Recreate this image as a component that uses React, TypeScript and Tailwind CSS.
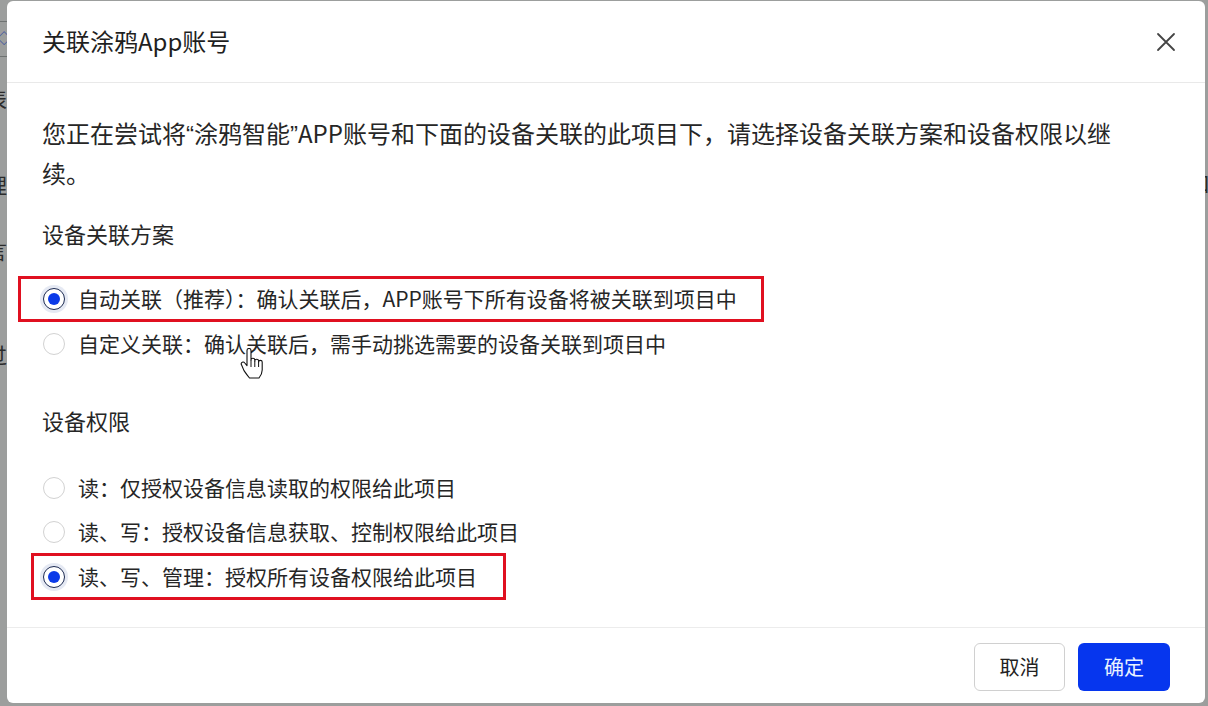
import React from "react";

const FONT = "font-['Microsoft_YaHei','Noto_Sans_CJK_SC','Noto_Sans',sans-serif]";

function Radio({ checked }: { checked?: boolean }) {
  if (checked) {
    return (
      <span className="w-[22px] h-[22px] rounded-full border border-[#1d2b52] bg-white flex items-center justify-center shrink-0 shadow-[0_0_0_3px_rgba(40,70,160,0.12)]">
        <span className="w-[12px] h-[12px] rounded-full bg-[#0b3ae8]" />
      </span>
    );
  }
  return <span className="w-[22px] h-[22px] rounded-full border border-[#d2d2d2] bg-white shrink-0" />;
}

function Q({ c }: { c: string }) {
  return <span className="font-['Liberation_Sans',sans-serif]">{c}</span>;
}

function HandCursor() {
  return (
    <svg width="24" height="34" viewBox="0 0 24 34" className="absolute left-[240px] top-[348px]">
      <path
        d="M7 2.5c0-1.2 1-2 2-2s2 .8 2 2V12c0-1 .9-1.7 1.9-1.7s1.9.8 1.9 1.7v1c0-1 .9-1.7 1.9-1.7s1.9.8 1.9 1.7v1c0-1 .9-1.6 1.8-1.6s1.8.7 1.8 1.6v8c0 3.5-1.6 6-3.2 8H9.5c-1.6-2-3.6-4.6-5.5-7.4L1.6 17c-.7-1 -.4-2.2.6-2.7.9-.5 1.9-.2 2.6.7L7 17.6V2.5z"
        fill="#fff"
        stroke="#111"
        strokeWidth="1.1"
        strokeLinejoin="round"
      />
      <path d="M11 12v7M14.8 13v6M18.6 14v5" stroke="#111" strokeWidth="1" fill="none" />
    </svg>
  );
}

export default function App() {
  return (
    <div className={`w-[1208px] h-[706px] bg-[#9c9e9d] flex overflow-hidden relative ${FONT}`}>
      {/* left backdrop strip */}
      <div className="w-[7px] h-full relative overflow-hidden shrink-0">
        <div className="absolute left-0 top-[21px] w-[7px] h-px bg-[#6f7372]" />
        <div className="absolute left-0 top-[56px] w-[7px] h-px bg-[#6f7372]" />
        <span className="absolute left-[-3px] top-[30px] text-[14px] text-[#2a3fa0] leading-none">◇</span>
        <span className="absolute left-[-14px] top-[88px] text-[21px] text-[#2b2b2b] leading-none">表</span>
        <span className="absolute left-[-14px] top-[174px] text-[21px] text-[#2b2b2b] leading-none">理</span>
        <span className="absolute left-[-14px] top-[240px] text-[21px] text-[#2b2b2b] leading-none">言</span>
        <span className="absolute left-[-14px] top-[344px] text-[21px] text-[#2b2b2b] leading-none">过</span>
      </div>

      {/* dialog */}
      <div className="w-[1198px] h-[702px] mt-px bg-white rounded-[6px] flex flex-col shrink-0 text-[#262626]">
        {/* header */}
        <div className="h-[82px] border-b border-[#e9e9e9] flex items-center justify-between pl-[35px] pr-[29px] shrink-0">
          <div className="text-[24px] leading-[32px] text-[#1f1f1f] mt-[-1px]">关联涂鸦App账号</div>
          <svg width="20" height="20" viewBox="0 0 20 20" className="mt-[1px]">
            <path d="M2 2L18 18M18 2L2 18" stroke="#444" strokeWidth="1.8" strokeLinecap="round" />
          </svg>
        </div>

        {/* body */}
        <div className="flex flex-col">
          <div className="ml-[35px] mt-[31px] text-[24px] whitespace-nowrap">
            <div className="h-[39px] flex items-center">
              <span>
                您正在尝试将<Q c="“" />涂鸦智能<Q c="”" />APP账号和下面的设备关联的此项目下，请选择设备关联方案和设备权限以继
              </span>
            </div>
            <div className="h-[39px] flex items-center">
              <span>续。</span>
            </div>
          </div>

          <div className="ml-[35px] mt-[25px] h-[32px] flex items-center text-[22px]">设备关联方案</div>

          <div className="mt-[27px] ml-[11px] w-[746px] h-[46px] border-[3px] border-[#e01020] flex items-center gap-[13px] pl-[22px] text-[21px] whitespace-nowrap">
            <Radio checked />
            <span>自动关联（推荐）：确认关联后，APP账号下所有设备将被关联到项目中</span>
          </div>
          <div className="h-[44px] ml-[36px] flex items-center gap-[13px] text-[21px] whitespace-nowrap">
            <Radio />
            <span>自定义关联：确认关联后，需手动挑选需要的设备关联到项目中</span>
          </div>

          <div className="ml-[35px] mt-[38px] h-[32px] flex items-center text-[22px]">设备权限</div>

          <div className="mt-[30px] h-[44px] ml-[36px] flex items-center gap-[13px] text-[21px] whitespace-nowrap">
            <Radio />
            <span>读：仅授权设备信息读取的权限给此项目</span>
          </div>
          <div className="h-[43px] ml-[36px] flex items-center gap-[13px] text-[21px] whitespace-nowrap">
            <Radio />
            <span>读、写：授权设备信息获取、控制权限给此项目</span>
          </div>
          <div className="ml-[24px] w-[475px] h-[47px] border-[3px] border-[#e01020] flex items-center gap-[13px] pl-[9px] text-[21px] whitespace-nowrap">
            <Radio checked />
            <span>读、写、管理：授权所有设备权限给此项目</span>
          </div>
        </div>

        {/* footer */}
        <div className="mt-auto h-[76px] border-t border-[#ececec] flex justify-end items-start pt-[15px] pr-[35px] gap-[13px] shrink-0">
          <button className="w-[91px] h-[48px] rounded-[6px] border border-[#d0d0d0] bg-white text-[20px] text-[#222]">
            取消
          </button>
          <button className="w-[92px] h-[48px] rounded-[6px] bg-[#0636ee] text-[20px] text-[#eaf2ff]">
            确定
          </button>
        </div>
      </div>

      {/* right backdrop strip */}
      <div className="flex-1 h-full relative overflow-hidden">
        <span className="absolute left-[-16px] top-[172px] text-[21px] text-[#2b2b2b] leading-none">口</span>
      </div>

      <HandCursor />
    </div>
  );
}
